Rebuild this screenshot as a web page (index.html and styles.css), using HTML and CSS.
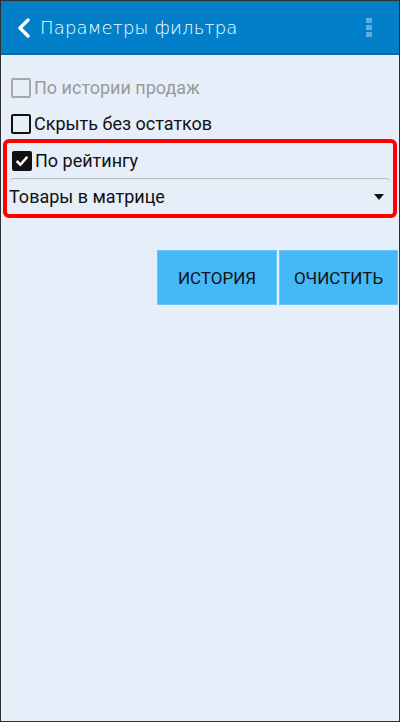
FILE: index.html
```html
<!DOCTYPE html>
<html lang="ru">
<head>
    <meta charset="UTF-8">
    <title>Параметры фильтра</title>
    <link rel="stylesheet" href="styles.css">
</head>
<body>
<div class="screen">
    <div class="topbar">
        <svg class="back" width="16" height="20" viewBox="0 0 16 20">
            <path d="M12 2 L4 10 L12 18" fill="none" stroke="#fff" stroke-width="3.4" stroke-linecap="round" stroke-linejoin="round"/>
        </svg>
        <div class="title">Параметры фильтра</div>
        <div class="menu">
            <span></span><span></span><span></span>
        </div>
    </div>

    <div class="content">
        <label class="row disabled">
            <span class="box"></span>
            <span class="text">По истории продаж</span>
        </label>
        <label class="row row2">
            <span class="box"></span>
            <span class="text">Скрыть без остатков</span>
        </label>

        <div class="marked">
            <label class="row row3">
                <span class="box checked">
                    <svg width="16" height="16" viewBox="0 0 15 15">
                        <path d="M2.5 7.5 L6 11 L12.5 3.5" fill="none" stroke="#fff" stroke-width="2.4"/>
                    </svg>
                </span>
                <span class="text">По рейтингу</span>
            </label>
            <div class="spinner">
                <span class="text">Товары в матрице</span>
                <span class="arrow"></span>
            </div>
        </div>

        <div class="buttons">
            <button class="btn hist">История</button>
            <button class="btn clear">Очистить</button>
        </div>
    </div>
</div>
</body>
</html>
```

FILE: styles.css
```css
body{
    margin: 0;
    background-color: #2e2f33;
    font-family: Roboto, "Noto Sans", sans-serif;
}
.screen{
    width: 400px;
    height: 722px;
    box-sizing: border-box;
    border: 1px solid #2e2f33;
    background-color: #e6eefa;
    overflow: hidden;
}
.topbar{
    height: 52px;
    background-color: #0180c9;
    border-bottom: 2px solid #0a6aa8;
    display: flex;
    align-items: center;
    color: white;
}
.back{
    margin-left: 15px;
    margin-top: 1px;
}
.title{
    margin-left: 8px;
    font-family: "DejaVu Sans", sans-serif;
    font-weight: 200;
    font-size: 18px;
    letter-spacing: 0.2px;
    flex: 1;
}
.menu{
    display: flex;
    flex-direction: column;
    gap: 2px;
    margin-right: 27px;
    margin-top: 1px;
}
.menu span{
    width: 6px;
    height: 5px;
    background-color: #5eaee0;
}
.content{
    padding-top: 14px;
}
.row{
    display: flex;
    align-items: center;
    height: 37px;
    padding-left: 10px;
    font-size: 18px;
    color: #111;
}
.row2{
    height: 35px;
}
.box{
    width: 16px;
    height: 16px;
    border: 2px solid #111;
    border-radius: 2px;
    margin-right: 3px;
    display: flex;
    align-items: center;
    justify-content: center;
    flex-shrink: 0;
}
.disabled{
    color: #9a9a9a;
}
.disabled .box{
    border-color: #a8a8a8;
}
.box.checked{
    background-color: #111;
}
.marked{
    margin: -2px 2px 0 2px;
    border: 4px solid #f00;
    border-radius: 6px;
}
.row3{
    height: 35px;
    padding-left: 5px;
}
.spinner{
    margin: 0 2px;
    border-top: 1px solid #b8b8bc;
    border-radius: 5px 5px 0 0;
    height: 35px;
    display: flex;
    align-items: center;
    justify-content: space-between;
    font-size: 18px;
    color: #111;
}
.arrow{
    width: 0;
    height: 0;
    border-left: 5px solid transparent;
    border-right: 5px solid transparent;
    border-top: 6px solid #111;
    margin-right: 7px;
}
.buttons{
    display: flex;
    justify-content: flex-end;
    gap: 2px;
    margin-top: 32px;
    margin-right: 1px;
}
.btn{
    height: 55px;
    border: 1px solid #6ac6fa;
    background-color: #45b8f8;
    font-family: Roboto, "Noto Sans", sans-serif;
    font-size: 17px;
    text-transform: uppercase;
    color: #111;
    padding: 0;
}
.hist{
    width: 120px;
}
.clear{
    width: 119px;
}
```
